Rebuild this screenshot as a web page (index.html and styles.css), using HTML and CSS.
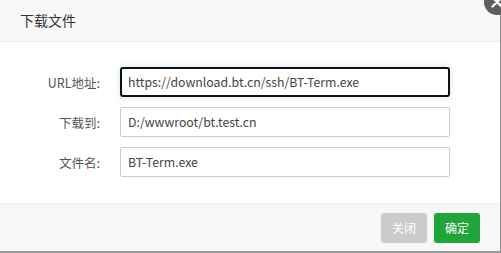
FILE: index.html
```html
<!DOCTYPE html>
<html lang="zh-CN">
<head>
    <meta charset="UTF-8">
    <title>下载文件</title>
    <link rel="stylesheet" href="styles.css">
</head>
<body>
<div class="layer">
    <div class="layer-title">下载文件</div>
    <a class="layer-close" href="javascript:;">
        <svg width="28" height="28" viewBox="0 0 28 28">
            <circle cx="14" cy="14" r="13" fill="#5f5f5f"/>
            <path d="M9.5 9.5 L18.5 18.5 M18.5 9.5 L9.5 18.5" stroke="#fff" stroke-width="2.4" stroke-linecap="round"/>
        </svg>
    </a>

    <div class="layer-content">
        <div class="line">
            <span class="tname">URL地址:</span>
            <input class="bt-input focus" type="text" value="https://download.bt.cn/ssh/BT-Term.exe">
        </div>
        <div class="line">
            <span class="tname">下载到:</span>
            <input class="bt-input" type="text" value="D:/wwwroot/bt.test.cn">
        </div>
        <div class="line">
            <span class="tname">文件名:</span>
            <input class="bt-input" type="text" value="BT-Term.exe">
        </div>
    </div>

    <div class="layer-btns">
        <button class="btn btn-default">关闭</button>
        <button class="btn btn-success">确定</button>
    </div>
</div>
</body>
</html>
```

FILE: styles.css
```css
* {
    padding: 0;
    margin: 0;
    box-sizing: border-box;
}

body {
    width: 501px;
    height: 253px;
    overflow: hidden;
    background: #fff;
    font-family: "Noto Sans CJK SC", "Liberation Sans", sans-serif;
    font-size: 12.5px;
    color: #555;
}

.layer {
    position: relative;
    width: 501px;
    height: 253px;
    border-right: 1px solid #8c8c8c;
    border-bottom: 2px solid #9a9a9a;
    display: flex;
    flex-direction: column;
}

.layer-title {
    height: 42px;
    line-height: 41px;
    padding-left: 20px;
    font-size: 14px;
    color: #333;
    background: #f8f8f8;
    border-bottom: 1px solid #eee;
}

.layer-close {
    position: absolute;
    right: -11px;
    top: -12px;
    width: 28px;
    height: 28px;
}

.layer-content {
    flex: 1;
    padding-top: 25px;
}

.line {
    display: flex;
    align-items: center;
    margin-bottom: 10px;
}

.tname {
    width: 100px;
    text-align: right;
    margin-right: 20px;
    color: #555;
}

.bt-input {
    width: 330px;
    height: 30px;
    padding: 0 7px;
    border: 1px solid #ccc;
    border-radius: 2px;
    font-family: "Noto Sans CJK SC", "Liberation Sans", sans-serif;
    font-size: 12.3px;
    color: #444;
    outline: none;
}

.bt-input.focus {
    border: 2px solid #111;
    border-radius: 3px;
    padding: 0 6px;
    box-shadow: 0 0 6px rgba(102, 175, 233, 0.35);
}

.layer-btns {
    height: 48px;
    background: #f6f7f7;
    border-top: 1px solid #eef0f0;
    display: flex;
    justify-content: flex-end;
    align-items: center;
    gap: 7px;
    padding-right: 20px;
}

.btn {
    width: 46px;
    height: 30px;
    border: none;
    border-radius: 3px;
    color: #fff;
    font-family: "Noto Sans CJK SC", sans-serif;
    font-size: 12px;
}

.btn-default {
    background: #cbcbcb;
}

.btn-success {
    background: #20a53a;
}
```
